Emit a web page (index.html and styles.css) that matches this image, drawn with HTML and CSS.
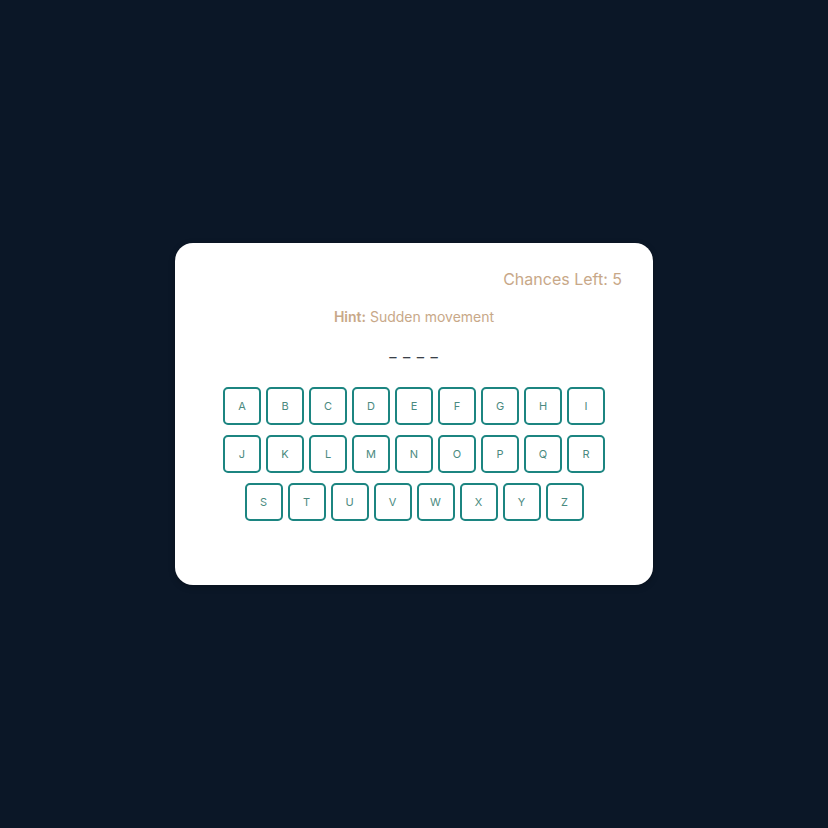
FILE: index.html
```html
<!DOCTYPE html>
<html lang="en">
<head>
<meta charset="utf-8">
<title>Hangman</title>
<link rel="stylesheet" href="styles.css">
</head>
<body>
<main class="game">
  <div class="chances">Chances Left: 5</div>
  <p class="hint"><b>Hint:</b> Sudden movement</p>
  <div class="word">_ _ _ _</div>
  <div class="keyboard">
    <div class="row">
      <button class="key">A</button><button class="key">B</button><button class="key">C</button><button class="key">D</button><button class="key">E</button><button class="key">F</button><button class="key">G</button><button class="key">H</button><button class="key">I</button>
    </div>
    <div class="row">
      <button class="key">J</button><button class="key">K</button><button class="key">L</button><button class="key">M</button><button class="key">N</button><button class="key">O</button><button class="key">P</button><button class="key">Q</button><button class="key">R</button>
    </div>
    <div class="row">
      <button class="key">S</button><button class="key">T</button><button class="key">U</button><button class="key">V</button><button class="key">W</button><button class="key">X</button><button class="key">Y</button><button class="key">Z</button>
    </div>
  </div>
</main>
</body>
</html>
```
FILE: styles.css
```css
* { box-sizing: border-box; }
html, body { margin: 0; padding: 0; }
body {
  background: #0b1727;
  height: 828px;
  display: flex;
  align-items: center;
  justify-content: center;
  font-family: Inter, "Noto Sans", sans-serif;
}
.game {
  width: 478px;
  height: 342px;
  background: #ffffff;
  border-radius: 18px;
  padding: 24px 31px 0;
  display: flex;
  flex-direction: column;
  box-shadow: 0 2px 6px rgba(0,0,0,0.25);
}
.chances {
  text-align: right;
  font-size: 16px;
  line-height: 24px;
  color: #c8a888;
}
.hint {
  margin: 16px 0 0;
  text-align: center;
  font-size: 14px;
  line-height: 20px;
  color: #c8a888;
}
.hint b { font-weight: 600; }
.word {
  margin-top: 12px;
  text-align: center;
  font-size: 16px;
  line-height: 24px;
  color: #3a4048;
  letter-spacing: 1px;
}
.keyboard {
  margin-top: 24px;
  display: flex;
  flex-direction: column;
  align-items: center;
  gap: 10px;
}
.row {
  display: flex;
  gap: 5px;
}
.key {
  width: 38px;
  height: 38px;
  border: 2px solid #1c8581;
  border-radius: 5px;
  background: #fff;
  color: #4a8a80;
  font-family: Inter, "Noto Sans", sans-serif;
  font-size: 11px;
  padding: 0;
  display: flex;
  align-items: center;
  justify-content: center;
}
```
